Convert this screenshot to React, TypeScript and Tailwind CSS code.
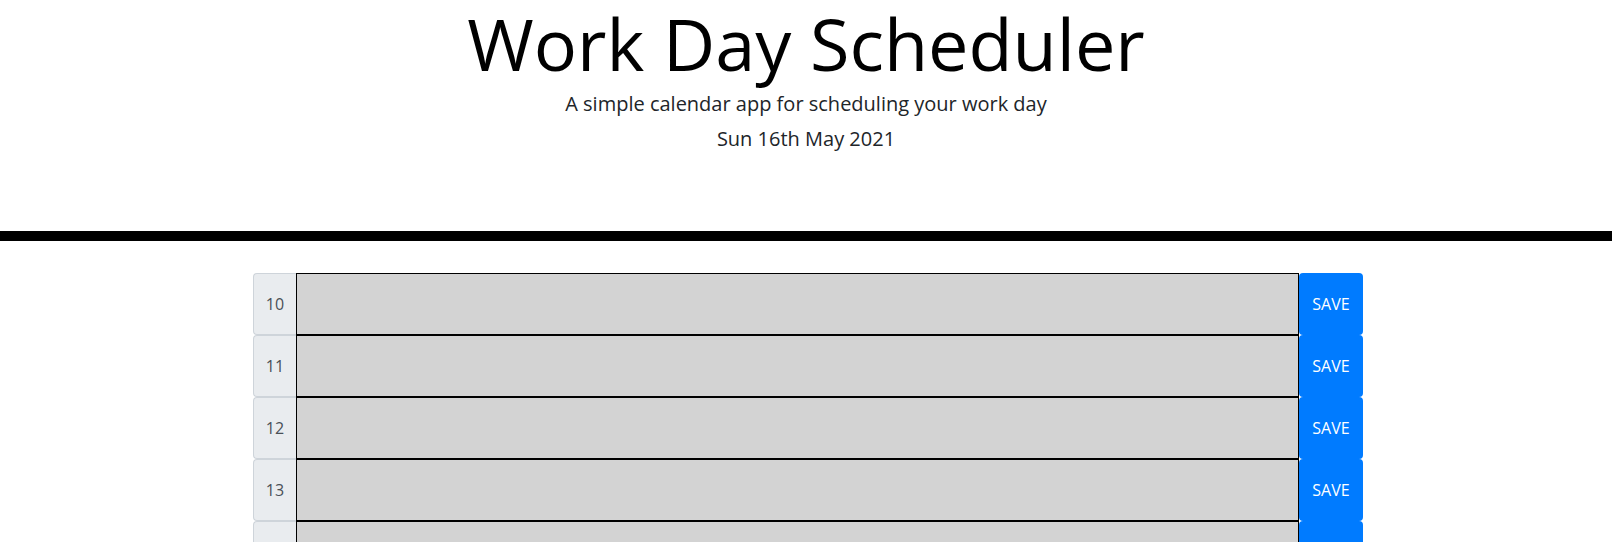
const HOURS = [10, 11, 12, 13, 14, 15, 16, 17];

const HourRow = ({ hour }: { hour: number }) => {
  return (
    <div className="flex h-[62px]">
      <div className="w-[43px] flex items-center justify-center bg-[#e9ecef] border border-r-0 border-[#ced4da] rounded-l-[4px] text-[16px] text-[#495057]">
        {hour}
      </div>
      <textarea
        aria-label={`Hour ${hour}`}
        className="flex-1 h-full resize-none bg-[#d3d3d3] border border-black outline-none p-2"
      />
      <button
        type="button"
        className="w-[64px] h-full bg-[#007bff] text-white text-[16px] rounded-[4px]"
      >
        SAVE
      </button>
    </div>
  );
};

export default function App() {
  return (
    <div className="min-h-screen bg-white font-['Open_Sans',sans-serif] text-[#212529]">
      <header className="text-center pb-[77px] border-b-[10px] border-black">
        <h1 className="text-[72px] leading-[86px] font-normal text-black">Work Day Scheduler</h1>
        <p className="mt-[3px] text-[20px] leading-[30px]">
          A simple calendar app for scheduling your work day
        </p>
        <p className="mt-[5px] text-[20px] leading-[30px]">Sun 16th May 2021</p>
      </header>
      <main className="w-[1114px] mx-auto mt-[32px] pl-[4px]">
        {HOURS.map((h) => (
          <HourRow key={h} hour={h} />
        ))}
      </main>
    </div>
  );
}
